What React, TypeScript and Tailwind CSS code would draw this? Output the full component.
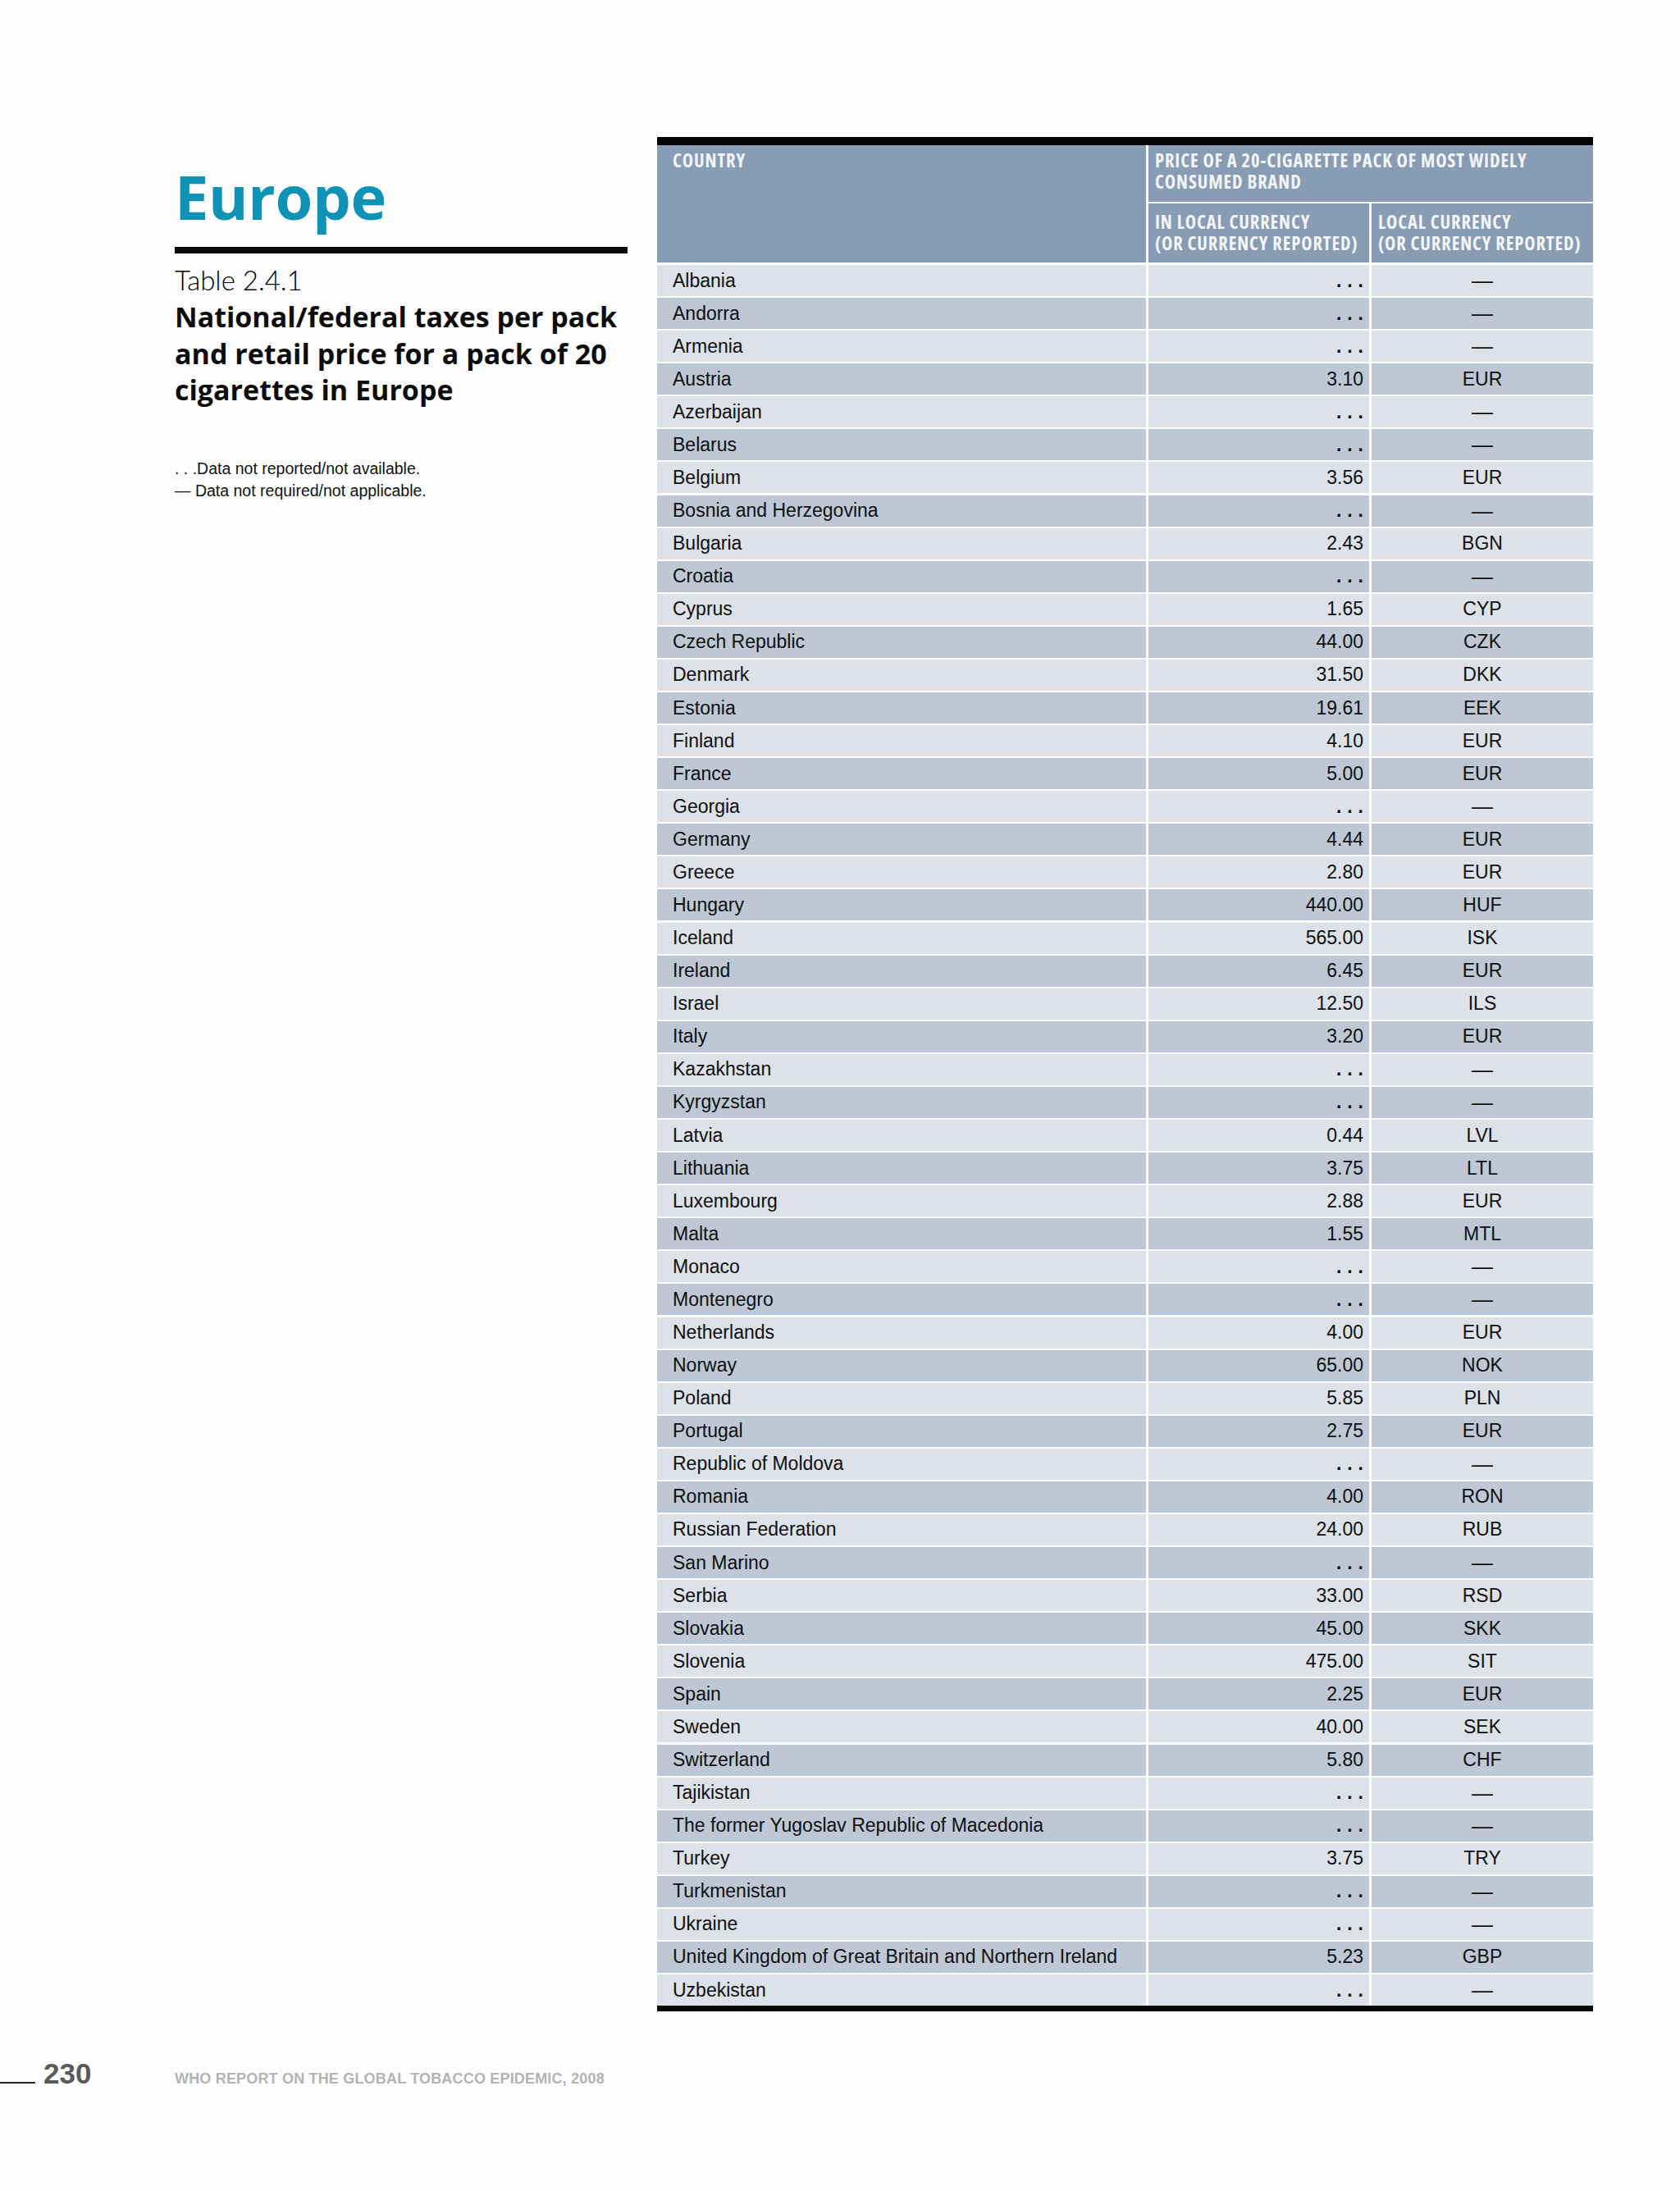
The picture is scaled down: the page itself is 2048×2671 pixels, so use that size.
import React from "react";

type Row = [string, string, string];

const rows: Row[] = [
  ["Albania", "...", "—"],
  ["Andorra", "...", "—"],
  ["Armenia", "...", "—"],
  ["Austria", "3.10", "EUR"],
  ["Azerbaijan", "...", "—"],
  ["Belarus", "...", "—"],
  ["Belgium", "3.56", "EUR"],
  ["Bosnia and Herzegovina", "...", "—"],
  ["Bulgaria", "2.43", "BGN"],
  ["Croatia", "...", "—"],
  ["Cyprus", "1.65", "CYP"],
  ["Czech Republic", "44.00", "CZK"],
  ["Denmark", "31.50", "DKK"],
  ["Estonia", "19.61", "EEK"],
  ["Finland", "4.10", "EUR"],
  ["France", "5.00", "EUR"],
  ["Georgia", "...", "—"],
  ["Germany", "4.44", "EUR"],
  ["Greece", "2.80", "EUR"],
  ["Hungary", "440.00", "HUF"],
  ["Iceland", "565.00", "ISK"],
  ["Ireland", "6.45", "EUR"],
  ["Israel", "12.50", "ILS"],
  ["Italy", "3.20", "EUR"],
  ["Kazakhstan", "...", "—"],
  ["Kyrgyzstan", "...", "—"],
  ["Latvia", "0.44", "LVL"],
  ["Lithuania", "3.75", "LTL"],
  ["Luxembourg", "2.88", "EUR"],
  ["Malta", "1.55", "MTL"],
  ["Monaco", "...", "—"],
  ["Montenegro", "...", "—"],
  ["Netherlands", "4.00", "EUR"],
  ["Norway", "65.00", "NOK"],
  ["Poland", "5.85", "PLN"],
  ["Portugal", "2.75", "EUR"],
  ["Republic of Moldova", "...", "—"],
  ["Romania", "4.00", "RON"],
  ["Russian Federation", "24.00", "RUB"],
  ["San Marino", "...", "—"],
  ["Serbia", "33.00", "RSD"],
  ["Slovakia", "45.00", "SKK"],
  ["Slovenia", "475.00", "SIT"],
  ["Spain", "2.25", "EUR"],
  ["Sweden", "40.00", "SEK"],
  ["Switzerland", "5.80", "CHF"],
  ["Tajikistan", "...", "—"],
  ["The former Yugoslav Republic of Macedonia", "...", "—"],
  ["Turkey", "3.75", "TRY"],
  ["Turkmenistan", "...", "—"],
  ["Ukraine", "...", "—"],
  ["United Kingdom of Great Britain and Northern Ireland", "5.23", "GBP"],
  ["Uzbekistan", "...", "—"],
];

function TableRow({ row, index }: { row: Row; index: number }) {
  const bg = index % 2 === 0 ? "bg-[#dde1e8]" : "bg-[#bec8d4]";
  const [country, price, cur] = row;
  return (
    <div className="flex gap-[3px] h-[38px]">
      <div className={`${bg} w-[596px] flex items-center pl-[19px] whitespace-nowrap`}>{country}</div>
      <div className={`${bg} w-[269px] flex items-center justify-end pr-[7px]`}>
        {price === "..." ? <span className="tracking-[0.3em] mr-[-0.3em] font-bold">...</span> : price}
      </div>
      <div className={`${bg} w-[270px] flex items-center justify-center`}>
        {cur === "—" ? <span className="text-[26px] leading-none">—</span> : cur}
      </div>
    </div>
  );
}

export default function App() {
  return (
    <div className="w-[2048px] h-[2671px] bg-[#fefefe] flex flex-col font-['Liberation_Sans',Arial,sans-serif] text-[#0f0f0f]">
      <div className="flex pt-[167px] pl-[213px] gap-[36px]">
        {/* Left column */}
        <div className="w-[552px] flex flex-col font-['Open_Sans',sans-serif]">
          <h1 className="mt-[37px] h-[72px] text-[74px] leading-[72px] font-bold text-[#0e93b6] tracking-[-0.005em]">
            Europe
          </h1>
          <div className="mt-[25px] h-[8px] bg-[#0a0a0a]" />
          <div className="mt-[12px] text-[33px] leading-[40px] font-light font-['Lato',sans-serif] text-[#000]">
            Table 2.4.1
          </div>
          <div className="mt-[3px] text-[34px] leading-[44.5px] font-bold text-[#0c0c0c] whitespace-nowrap">
            National/federal taxes per pack
            <br />
            and retail price for a pack of 20
            <br />
            cigarettes in Europe
          </div>
          <div className="mt-[60px] text-[19.5px] leading-[27px] text-[#111] font-['Liberation_Sans',Arial,sans-serif]">
            <div>. . .Data not reported/not available.</div>
            <div>— Data not required/not applicable.</div>
          </div>
        </div>

        {/* Table */}
        <div className="w-[1141px] flex flex-col">
          <div className="h-[10px] bg-[#050505]" />
          <div className="flex gap-[3px] h-[143px] font-['Open_Sans',sans-serif] [font-stretch:75%] font-bold text-[22.5px] tracking-[0.9px] leading-[26px] text-[#f3f5f8]">
            <div className="w-[596px] bg-[#889db4] pl-[19px] pt-[6px]">COUNTRY</div>
            <div className="w-[542px] flex flex-col gap-[2px]">
              <div className="h-[69px] bg-[#889db4] pl-[8px] pt-[6px] whitespace-nowrap">
                PRICE OF A 20-CIGARETTE PACK OF MOST WIDELY
                <br />
                CONSUMED BRAND
              </div>
              <div className="h-[72px] flex gap-[3px]">
                <div className="w-[269px] bg-[#889db4] pl-[8px] pt-[10px] whitespace-nowrap">
                  IN LOCAL CURRENCY
                  <br />
                  (OR CURRENCY REPORTED)
                </div>
                <div className="w-[270px] bg-[#889db4] pl-[8px] pt-[10px] whitespace-nowrap">
                  LOCAL CURRENCY
                  <br />
                  (OR CURRENCY REPORTED)
                </div>
              </div>
            </div>
          </div>
          <div className="mt-[3px] flex flex-col gap-[2.08px] text-[23px] leading-none">
            {rows.map((r, i) => (
              <TableRow key={r[0]} row={r} index={i} />
            ))}
          </div>
          <div className="h-[7px] bg-[#050505]" />
        </div>
      </div>

      {/* Footer */}
      <div className="mt-[58px] flex items-baseline">
        <div className="w-[43px] h-[2px] bg-[#2a2a2a]" />
        <div className="ml-[10px] w-[160px] text-[35px] leading-none font-bold text-[#5a5a5a]">
          230
        </div>
        <div className="text-[18px] leading-none font-bold text-[#b3b3b3] tracking-[0.01em]">
          WHO REPORT ON THE GLOBAL TOBACCO EPIDEMIC, 2008
        </div>
      </div>
    </div>
  );
}
